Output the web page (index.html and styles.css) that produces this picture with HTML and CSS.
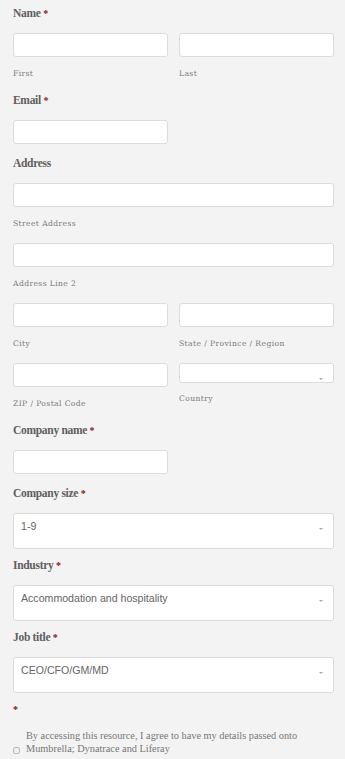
FILE: index.html
```html
<!DOCTYPE html>
<html lang="en">
<head>
    <meta charset="UTF-8">
    <meta name="viewport" content="width=device-width, initial-scale=1.0">
    <title>Download form</title>
    <link rel="stylesheet" href="styles.css">
</head>
<body>
    <form class="lead-form">
        <div class="field">
            <div class="field-label">Name <span class="req">*</span></div>
            <div class="row">
                <div class="col">
                    <div class="input"></div>
                    <div class="sublabel">First</div>
                </div>
                <div class="col">
                    <div class="input"></div>
                    <div class="sublabel">Last</div>
                </div>
            </div>
        </div>

        <div class="field">
            <div class="field-label">Email <span class="req">*</span></div>
            <div class="row">
                <div class="input"></div>
            </div>
        </div>

        <div class="field">
            <div class="field-label">Address</div>
            <div class="sub-row">
                <div class="input"></div>
                <div class="sublabel">Street Address</div>
            </div>
            <div class="sub-row">
                <div class="input"></div>
                <div class="sublabel">Address Line 2</div>
            </div>
            <div class="row sub-row">
                <div class="col">
                    <div class="input"></div>
                    <div class="sublabel">City</div>
                </div>
                <div class="col">
                    <div class="input"></div>
                    <div class="sublabel">State / Province / Region</div>
                </div>
            </div>
            <div class="row">
                <div class="col">
                    <div class="input"></div>
                    <div class="sublabel">ZIP / Postal Code</div>
                </div>
                <div class="col">
                    <div class="select select-short"><span class="caret"></span></div>
                    <div class="sublabel sublabel-country">Country</div>
                </div>
            </div>
        </div>

        <div class="field">
            <div class="field-label">Company name <span class="req">*</span></div>
            <div class="row">
                <div class="input"></div>
            </div>
        </div>

        <div class="field field-select">
            <div class="field-label">Company size <span class="req">*</span></div>
            <div class="select">1-9<span class="caret"></span></div>
        </div>

        <div class="field field-select">
            <div class="field-label">Industry <span class="req">*</span></div>
            <div class="select">Accommodation and hospitality<span class="caret"></span></div>
        </div>

        <div class="field field-select">
            <div class="field-label">Job title <span class="req">*</span></div>
            <div class="select">CEO/CFO/GM/MD<span class="caret"></span></div>
        </div>

        <div class="field">
            <div class="field-label"><span class="req">*</span></div>
            <label class="consent">
                <span class="checkbox"></span>
                <span class="consent-text">By accessing this resource, I agree to have my details passed onto Mumbrella; Dynatrace and Liferay</span>
            </label>
        </div>
    </form>
</body>
</html>
```

FILE: styles.css
```css
body {
    margin: 0;
    padding: 0;
    background-color: #f3f3f3;
    font-family: "Liberation Serif", "DejaVu Serif", serif;
    color: #555;
}
.lead-form {
    padding: 3px 11px 0 13px;
}
.field {
    margin-bottom: 9px;
}
.field-select {
    margin-bottom: 6px;
}
.field-label {
    height: 20px;
    line-height: 20px;
    font-size: 11.5px;
    font-weight: bold;
    letter-spacing: -0.3px;
    color: #606060;
    margin-bottom: 10px;
}
.req {
    color: #8a1414;
    font-size: 10px;
}
.row {
    display: grid;
    grid-template-columns: 1fr 1fr;
    column-gap: 11px;
}
.sub-row {
    margin-bottom: 12px;
}
.input,
.select {
    box-sizing: border-box;
    background: #fff;
    border: 1px solid #dcdcdc;
    border-radius: 3px;
    height: 24px;
}
.select {
    position: relative;
    height: 36px;
    padding: 6px 0 0 7px;
    font-family: "Liberation Sans", Arial, sans-serif;
    font-size: 10.6px;
    line-height: 13px;
    color: #666;
}
.select-short {
    height: 20px;
}
.caret {
    position: absolute;
    top: 14px;
    right: 10px;
    width: 0;
    height: 0;
    border-left: 2.5px solid transparent;
    border-right: 2.5px solid transparent;
    border-top: 2px solid #aaa;
}
.sublabel {
    margin-top: 10px;
    line-height: 14px;
    font-family: "DejaVu Serif", serif;
    font-size: 7.6px;
    letter-spacing: 0.4px;
    color: #7a7a7a;
}
.sublabel-country {
    margin-top: 9px;
}
.consent {
    display: flex;
    align-items: flex-end;
    margin-top: 9px;
}
.checkbox {
    flex: none;
    box-sizing: border-box;
    width: 7px;
    height: 7px;
    margin: 0 6px 1px 0;
    border: 1px solid #bbb;
    border-radius: 2px;
    background: #eee;
}
.consent-text {
    font-size: 10.3px;
    line-height: 13px;
    color: #777;
}
```
